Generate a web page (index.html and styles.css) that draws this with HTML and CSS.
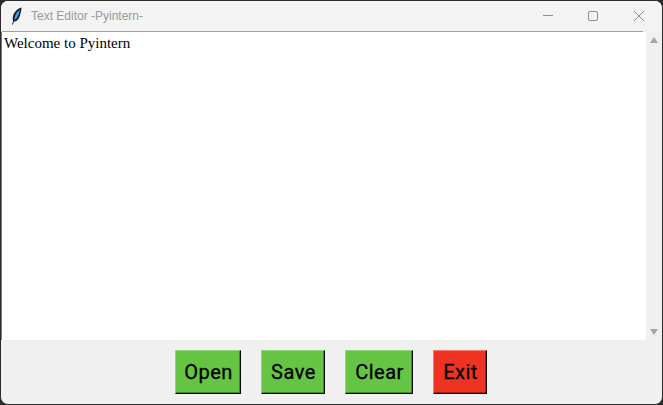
FILE: index.html
```html
<!DOCTYPE html>
<html lang="en">
<head>
<meta charset="UTF-8">
<meta name="viewport" content="width=device-width, initial-scale=1.0">
<title>Text Editor -Pyintern-</title>
<link rel="stylesheet" href="styles.css">
</head>
<body>
<div class="window">
    <div class="titlebar">
        <svg class="app-icon" width="12" height="18" viewBox="0 0 12 18">
            <path d="M10.5 0.5C6.5 1.5 3 5 2 9.5C1.6 11.5 1.7 13 2.2 14L1 17.5L1.8 17.7L3 14.6C5.5 14.6 7.5 12.5 8.6 9.5C9.6 6.5 10.5 3 10.5 0.5Z" fill="#0b1a33"/>
            <path d="M9 2.6C6.5 4.2 4.5 7 3.8 10L3.3 13C5 12.5 6.4 10.8 7.2 8.6C7.9 6.6 8.6 4.6 9 2.6Z" fill="#4f9bd8"/>
        </svg>
        <span class="title">Text Editor -Pyintern-</span>
        <div class="controls">
            <svg width="10" height="10" viewBox="0 0 10 10"><path d="M0 4.5H10" stroke="#8f8f8f" fill="none"/></svg>
            <svg width="10" height="10" viewBox="0 0 10 10"><rect x="0.5" y="0.5" width="9" height="9" rx="1.5" stroke="#8f8f8f" fill="none"/></svg>
            <svg class="close" width="10" height="10" viewBox="0 0 10 10"><path d="M0 0L10 10M10 0L0 10" stroke="#8f8f8f" fill="none"/></svg>
        </div>
    </div>
    <div class="rule"></div>
    <div class="main">
        <div class="editor">Welcome to Pyintern</div>
        <div class="scrollbar">
            <span class="arrow-up"></span>
            <span class="arrow-down"></span>
        </div>
    </div>
    <div class="buttons">
        <button class="btn btn-open">Open</button>
        <button class="btn btn-save">Save</button>
        <button class="btn btn-clear">Clear</button>
        <button class="btn btn-exit">Exit</button>
    </div>
</div>
</body>
</html>
```

FILE: styles.css
```css
html, body {
    margin: 0;
    height: 100%;
    background-color: #2b2b2b;
}
.window {
    box-sizing: border-box;
    width: 663px;
    height: 405px;
    display: flex;
    flex-direction: column;
    background-color: #f0f0f0;
    border: 1px solid #2b2b2b;
    border-radius: 8px;
    overflow: hidden;
}
.titlebar {
    height: 30px;
    flex: none;
    display: flex;
    align-items: center;
    padding-left: 10px;
    background-color: #f3f3f3;
    font-family: "Liberation Sans", Arial, sans-serif;
    font-size: 12px;
    color: #9a9a9a;
}
.app-icon {
    margin-right: 8px;
}
.controls {
    margin-left: auto;
    margin-right: 18px;
    display: flex;
    gap: 35px;
}
.close {
    margin-left: 1px;
}
.rule {
    height: 1px;
    flex: none;
    margin: 0 19px 0 1px;
    background-color: #a0a0a0;
}
.main {
    flex: 1;
    display: flex;
    border-left: 1px solid #7a7a7a;
}
.editor {
    flex: 1;
    background-color: #fff;
    padding: 2px 2px;
    font-family: "Liberation Serif", "Times New Roman", serif;
    font-size: 15px;
    line-height: 18px;
    color: #000;
}
.scrollbar {
    width: 16px;
    flex: none;
    display: flex;
    flex-direction: column;
    justify-content: space-between;
    align-items: center;
    padding: 5px 0;
}
.arrow-up, .arrow-down {
    width: 0;
    height: 0;
    border-left: 4px solid transparent;
    border-right: 4px solid transparent;
}
.arrow-up {
    border-bottom: 6px solid #a3a3a3;
}
.arrow-down {
    border-top: 6px solid #a3a3a3;
}
.buttons {
    height: 64px;
    flex: none;
    box-sizing: border-box;
    display: flex;
    justify-content: center;
    gap: 20px;
    padding-top: 10px;
    padding-right: 2px;
}
.btn {
    height: 44px;
    box-sizing: border-box;
    padding: 0 0 0 2px;
    border: 1px solid;
    border-color: #8fd873 #000 #000 #8fd873;
    box-shadow: inset -1px -1px 0 #3f8a2c;
    font-family: Roboto, Arial, sans-serif;
    font-size: 20px;
    letter-spacing: 0.5px;
    -webkit-text-stroke: 0.3px #000;
    color: #000;
    background-color: #66c444;
}
.btn-open { width: 66px; }
.btn-save { width: 64px; }
.btn-clear { width: 68px; }
.btn-exit {
    width: 54px;
    background-color: #ef3323;
    border-color: #f77a6e #000 #000 #f77a6e;
    box-shadow: inset -1px -1px 0 #a52116;
}
```
